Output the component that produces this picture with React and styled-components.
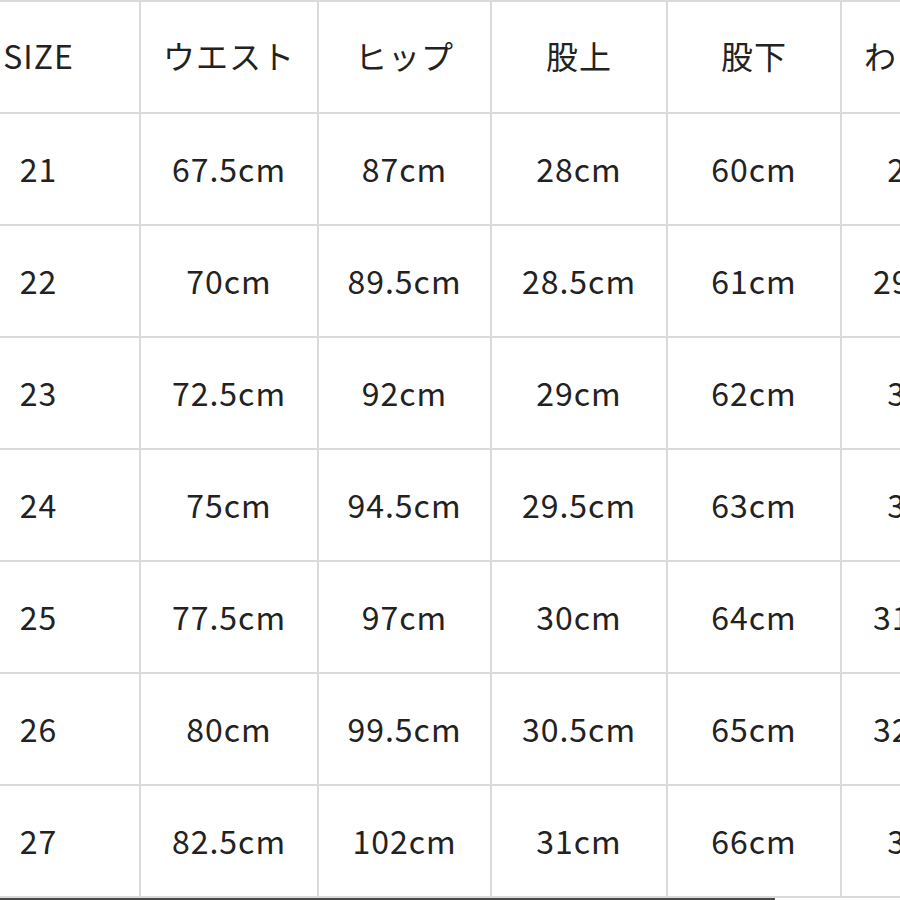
import React from 'react';
import styled, { createGlobalStyle } from 'styled-components';

const GlobalStyle = createGlobalStyle`
  html, body {
    margin: 0;
    padding: 0;
    background: #ffffff;
    overflow: hidden;
  }
`;

const Page = styled.div`
  width: 900px;
  height: 900px;
  overflow: hidden;
  background: #ffffff;
  display: flex;
  flex-direction: column;
`;

const SizeGrid = styled.div`
  display: grid;
  grid-template-columns: 201px 176px 171px 174px 172px 176px;
  grid-auto-rows: 110px;
  gap: 2px;
  padding: 2px;
  margin-left: -64px;
  width: max-content;
  background: #dadada;
`;

const Cell = styled.div`
  background: #ffffff;
  display: flex;
  align-items: center;
  justify-content: center;
  font-family: "Noto Sans CJK JP", "Noto Sans", sans-serif;
  font-size: 32px;
  letter-spacing: 1px;
  color: #222222;
  white-space: nowrap;
  padding-bottom: ${(p) => (p.$head ? '5px' : '2px')};
  box-sizing: border-box;
`;

const BottomEdge = styled.div`
  width: 775px;
  height: 2px;
  background: #4a4a4a;
`;

const headers = ['SIZE', 'ウエスト', 'ヒップ', '股上', '股下', 'わたり幅'];

const rows = [
  ['21', '67.5cm', '87cm', '28cm', '60cm', '28cm'],
  ['22', '70cm', '89.5cm', '28.5cm', '61cm', '29.5cm'],
  ['23', '72.5cm', '92cm', '29cm', '62cm', '30cm'],
  ['24', '75cm', '94.5cm', '29.5cm', '63cm', '31cm'],
  ['25', '77.5cm', '97cm', '30cm', '64cm', '31.5cm'],
  ['26', '80cm', '99.5cm', '30.5cm', '65cm', '32.5cm'],
  ['27', '82.5cm', '102cm', '31cm', '66cm', '33cm'],
];

export default function App() {
  return (
    <Page>
      <GlobalStyle />
      <SizeGrid>
        {headers.map((h) => (
          <Cell key={h} $head>{h}</Cell>
        ))}
        {rows.map((row) =>
          row.map((value, i) => <Cell key={row[0] + '-' + i}>{value}</Cell>)
        )}
      </SizeGrid>
      <BottomEdge />
    </Page>
  );
}
